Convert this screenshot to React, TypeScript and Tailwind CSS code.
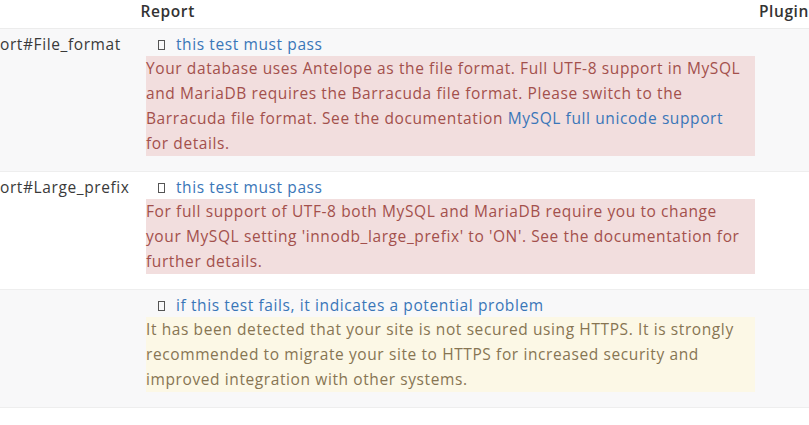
import React from "react";

type Row = {
  name: string;
  level: string;
  tone: "danger" | "warning";
  striped: boolean;
  lines: React.ReactNode[];
};

const link = "text-[#3a76b8]";

const rows: Row[] = [
  {
    name: "ort#File_format",
    level: "this test must pass",
    tone: "danger",
    striped: true,
    lines: [
      "Your database uses Antelope as the file format. Full UTF-8 support in MySQL",
      "and MariaDB requires the Barracuda file format. Please switch to the",
      <>
        Barracuda file format. See the documentation{" "}
        <a href="#" className={link}>
          MySQL full unicode support
        </a>
      </>,
      "for details.",
    ],
  },
  {
    name: "ort#Large_prefix",
    level: "this test must pass",
    tone: "danger",
    striped: false,
    lines: [
      "For full support of UTF-8 both MySQL and MariaDB require you to change",
      "your MySQL setting 'innodb_large_prefix' to 'ON'. See the documentation for",
      "further details.",
    ],
  },
  {
    name: "",
    level: "if this test fails, it indicates a potential problem",
    tone: "warning",
    striped: true,
    lines: [
      "It has been detected that your site is not secured using HTTPS. It is strongly",
      "recommended to migrate your site to HTTPS for increased security and",
      "improved integration with other systems.",
    ],
  },
];

function MissingIcon() {
  return <span className="inline-block w-[7px] h-[10px] border border-[#555] mr-[11px] translate-y-[1px]" />;
}

export default function App() {
  return (
    <div
      className="w-[809px] h-[425px] overflow-hidden bg-white text-[15.5px] tracking-[0.6px] text-[#3a3a3a]"
      style={{ fontFamily: "'Open Sans', 'Liberation Sans', sans-serif" }}
    >
      <div className="flex h-[29px] items-center pb-[5px] border-b border-[#ececec]">
        <div className="w-[142px]" />
        <div className="w-[625px] font-semibold text-[#333]">Report</div>
        <div className="font-semibold text-[#333] whitespace-nowrap">Plugin</div>
      </div>

      {rows.map((row, i) => (
        <div
          key={i}
          className={`flex pt-[3px] pb-[15px] border-b border-[#eeeeee] ${row.striped ? "bg-[#f8f8f9]" : "bg-white"}`}
        >
          <div className="w-[146px] leading-[24px] whitespace-nowrap">{row.name}</div>
          <div className="w-[609px]">
            <div className={`leading-[24px] pl-[12px] flex items-center ${link}`}>
              <MissingIcon />
              {row.level}
            </div>
            <div
              className={`leading-[25px] ${
                row.tone === "danger" ? "bg-[#f2dede] text-[#a3504c]" : "bg-[#fcf8e6] text-[#877553]"
              }`}
            >
              {row.lines.map((line, j) => (
                <div key={j} className="whitespace-nowrap">
                  {line}
                </div>
              ))}
            </div>
          </div>
        </div>
      ))}
    </div>
  );
}
